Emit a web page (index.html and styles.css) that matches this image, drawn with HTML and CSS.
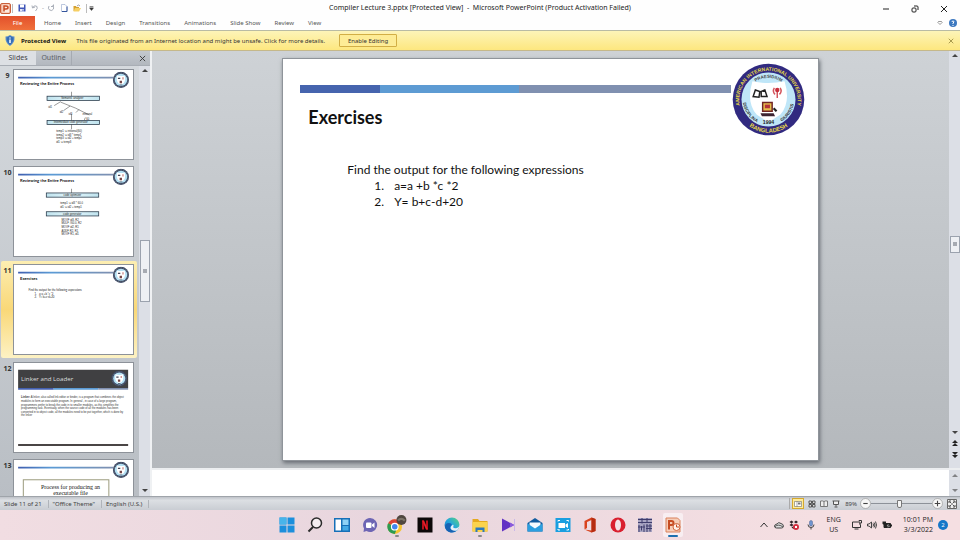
FILE: index.html
```html
<!DOCTYPE html>
<html lang="en">
<head>
<meta charset="utf-8">
<title>Compiler Lecture 3.pptx - Microsoft PowerPoint</title>
<link rel="stylesheet" href="styles.css">
</head>
<body>
<svg class="defs" aria-hidden="true">
  <defs>
    <linearGradient id="gDoc" x1="0" y1="0" x2="1" y2="0"><stop offset="0" stop-color="#3f5fb0"/><stop offset=".35" stop-color="#5b9bd5"/><stop offset="1" stop-color="#7f90b0"/></linearGradient>
    <linearGradient id="gBox" x1="0" y1="0" x2="1" y2="0"><stop offset="0" stop-color="#bfe3ee"/><stop offset=".5" stop-color="#e4f6fb"/><stop offset="1" stop-color="#bfe3ee"/></linearGradient>
    <linearGradient id="gEdge" x1="0" y1="1" x2="1" y2="0"><stop offset="0" stop-color="#1673c4"/><stop offset=".5" stop-color="#23a5dd"/><stop offset="1" stop-color="#5fd678"/></linearGradient>
    <symbol id="seal" viewBox="0 0 100 100">
      <circle cx="50" cy="50" r="49" fill="#312a80"/>
      <circle cx="50" cy="50" r="37" fill="#bfe6f8"/>
      <path d="M28 25Q50 30 72 25Q81 54 66 71L50 81L34 71Q19 54 28 25Z" fill="#fff"/>
      <path id="arcTop" d="M15 70A40 40 0 1 1 85 70" fill="none"/>
      <path id="arcBottom" d="M18 82A45 45 0 0 0 82 82" fill="none"/>
      <path id="arcMotto" d="M22 38A31 31 0 0 1 78 38" fill="none"/>
      <path id="arcLeft" d="M15 46A35 35 0 0 0 42 84" fill="none"/>
      <path id="arcRight" d="M58 84A35 35 0 0 0 85 46" fill="none"/>
      <g font-family="Liberation Sans, sans-serif" font-weight="700" text-anchor="middle">
        <text font-size="7" fill="#e6d848"><textPath href="#arcTop" startOffset="50%">AMERICAN INTERNATIONAL UNIVERSITY</textPath></text>
        <text font-size="8" fill="#e6d848"><textPath href="#arcBottom" startOffset="50%">BANGLADESH</textPath></text>
        <text font-size="6" fill="#444"><textPath href="#arcMotto" startOffset="50%">PRAESIDIUM</textPath></text>
        <text font-size="6" fill="#333"><textPath href="#arcLeft" startOffset="50%">DISCIPLINA</textPath></text>
        <text font-size="6" fill="#333"><textPath href="#arcRight" startOffset="50%">GIURISTIS</textPath></text>
        <text x="50" y="84" font-size="7" fill="#222">1994</text>
      </g>
      <path d="M29 46L32 37L38 39L37 47ZM40 46L40 39L45 37L48 46Z" fill="#fff" stroke="#222" stroke-width="2"/>
      <path d="M62 48V39M58 34Q55 39 59 43M66 34Q69 39 65 43" stroke="#d3545c" stroke-width="2" fill="none"/><circle cx="62" cy="37" r="3" fill="#c8303c"/>
      <path d="M42 54H55V66H42Z" fill="#e8bf4c" stroke="#702424" stroke-width="2"/><path d="M45 57H52V62H45Z" fill="#b4323a"/><path d="M39 69H57L59 73H41Z" fill="#3c2432"/><path d="M57 62L61 66" stroke="#222" stroke-width="3"/>
    </symbol>
    <symbol id="sealSmall" viewBox="0 0 100 100">
      <circle cx="50" cy="50" r="48" fill="#3b4668"/>
      <circle cx="50" cy="50" r="42" fill="none" stroke="#7f8a74" stroke-width="4" stroke-dasharray="6 5"/>
      <circle cx="50" cy="50" r="37" fill="#b4e0f3"/>
      <path d="M28 24Q50 31 72 24Q80 54 66 70L50 80L34 70Q20 54 28 24Z" fill="#fff"/>
      <path d="M32 38h14v7H32z" fill="#445"/><path d="M59 34h6v13h-6z" fill="#b66"/><path d="M42 55h14v15H42z" fill="#734445"/><path d="M42 80h16" stroke="#456" stroke-width="5"/>
    </symbol>
    <symbol id="docHead" viewBox="0 0 480 360">
      <path d="M16 27H400V34H16Z" fill="url(#gDoc)"/>
      <use href="#sealSmall" x="398" y="6" width="68" height="68"/>
    </symbol>
  </defs>
</svg>

<header class="titlebar">
  <div class="quick">
    <svg class="app" viewBox="0 0 22 22"><rect x="1" y="1" width="20" height="20" rx="3" fill="#f3b49c" stroke="#c9603b" stroke-width="2"/><rect x="5" y="3" width="13" height="16" fill="#fbe9e0"/><path d="M8 17V6H12Q16 6 16 9Q16 12 12 12H8" fill="none" stroke="#c84a20" stroke-width="3"/></svg>
    <i class="bar"></i>
    <button aria-label="Save"><svg viewBox="0 0 16 16"><path d="M1 1H15V15H1Z" fill="#3f55b8"/><path d="M4 1H12V7H4Z" fill="#fff"/><path d="M4 10H12V15H4Z" fill="#dfe4f5"/><path d="M9 11h2v3H9z" fill="#3f55b8"/></svg></button>
    <button aria-label="Undo"><svg viewBox="0 0 16 16"><path d="M2 3L3 8L8 6M3 7Q8 1 12 5Q14 9 9 14" fill="none" stroke="#a9aeb8" stroke-width="2"/></svg></button>
    <span class="dash">-</span>
    <button aria-label="Repeat"><svg viewBox="0 0 16 16"><path d="M4 4Q1 9 5 12Q10 15 13 10Q14 6 11 3M13 1V5H8" fill="none" stroke="#a9aeb8" stroke-width="2"/></svg></button>
    <button aria-label="New"><svg viewBox="0 0 16 16"><path d="M3 1H10L14 5V15H3Z" fill="#fff" stroke="#7d93bf" stroke-width="1"/><path d="M14 5V15H4" stroke="#33549c" stroke-width="2" fill="none"/></svg></button>
    <button aria-label="Open"><svg viewBox="0 0 16 16"><path d="M1 4H6L7 6H12V14H1Z" fill="#d5a130"/><path d="M4 8H16L12 15H1Z" fill="#f6cf63"/><path d="M8 4Q11 0 14 4" fill="none" stroke="#445" stroke-width="1"/></svg></button>
    <i class="bar end"></i>
    <button class="more" aria-label="Customize"><svg viewBox="0 0 8 8"><path d="M1 1H7M1 3H7L4 7Z" fill="#333" stroke="#333" stroke-width="1"/></svg></button>
  </div>
  <h1>Compiler Lecture 3.pptx [Protected View]&nbsp; -&nbsp; Microsoft PowerPoint (Product Activation Failed)</h1>
  <div class="winbtns">
    <button aria-label="Minimize"><svg viewBox="0 0 8 8"><path d="M1 4H7" stroke="#222" fill="none"/></svg></button>
    <button aria-label="Restore"><svg viewBox="0 0 8 8"><rect x="1" y="3" width="4" height="4" rx="1" fill="none" stroke="#222"/><path d="M3 1H6Q7 1 7 2V5" fill="none" stroke="#222"/></svg></button>
    <button aria-label="Close"><svg viewBox="0 0 8 8"><path d="M1 1L7 7M7 1L1 7" stroke="#222" fill="none"/></svg></button>
  </div>
</header>

<nav class="ribbon">
  <button class="file">File</button>
  <button>Home</button><button>Insert</button><button>Design</button><button>Transitions</button><button>Animations</button><button>Slide Show</button><button>Review</button><button>View</button>
  <span class="grow"></span>
  <button class="glyph" aria-label="Expand ribbon"><svg viewBox="0 0 8 8"><path d="M2 2H6L7 3L4 6L1 3Z" fill="#fff" stroke="#777"/></svg></button>
  <button class="glyph" aria-label="Help"><svg viewBox="0 0 8 8"><circle cx="4" cy="4" r="4" fill="#3c78c0"/><path d="M3 3Q3 2 4 2Q5 2 5 3L4 4V5M4 6V7" fill="none" stroke="#fff"/></svg></button>
</nav>

<section class="message">
  <svg viewBox="0 0 20 22"><path d="M10 0Q15 3 19 3Q20 16 10 22Q0 16 1 3Q5 3 10 0Z" fill="#5f8fcb"/><path d="M10 2Q14 4 17 5Q17 15 10 20Q3 15 3 5Q6 4 10 2Z" fill="#356db5"/><path d="M10 5V7M10 9V16" stroke="#fff" stroke-width="3"/></svg>
  <strong>Protected View</strong>
  <span>This file originated from an Internet location and might be unsafe. Click for more details.</span>
  <button class="enable">Enable Editing</button>
  <i class="grow"></i>
  <button class="dismiss" aria-label="Close message"><svg viewBox="0 0 8 8"><path d="M1 1L7 7M7 1L1 7" stroke="#8d7f34" stroke-width="1"/></svg></button>
</section>

<main>
  <aside>
    <div class="tabs"><button class="on">Slides</button><button class="off">Outline</button><i class="grow"></i><button class="x" aria-label="Close pane"><svg viewBox="0 0 8 8"><path d="M1 1L7 7M7 1L1 7" stroke="#333" stroke-width="1"/></svg></button></div>
    <div class="panel">
      <ol class="thumbs">
        <li><b>9</b><svg viewBox="0 0 480 360"><use href="#docHead"/>
          <text class="th" x="24" y="61">Reviewing the Entire Process</text>
          <g class="box"><rect x="133" y="106" width="212" height="17"/><rect x="133" y="204" width="212" height="16"/></g>
          <path class="ln" d="M232 88V106M188 128L162 144M188 130L248 154L304 182M226 146L200 164M262 160L250 172M288 192L284 202M232 178V204M232 220V240"/>
          <g class="tiny"><text x="190" y="118">Semantic analyzer</text><text x="160" y="216">Intermediate code generator</text><text x="138" y="154">id1</text><text x="184" y="174">id2</text><text x="220" y="182">id3</text><text x="276" y="182">inttoreal</text><text x="292" y="201">60</text>
          <text x="170" y="251">temp1 := inttoreal(60)</text><text x="170" y="266">temp2 := id3 * temp1</text><text x="170" y="281">temp3 := id2 + temp2</text><text x="170" y="296">id1 := temp3</text></g></svg></li>
        <li><b>10</b><svg viewBox="0 0 480 360"><use href="#docHead"/>
          <text class="th" x="24" y="61">Reviewing the Entire Process</text>
          <g class="box"><rect x="130" y="105" width="212" height="17"/><rect x="130" y="181" width="212" height="17"/></g>
          <path class="ln" d="M232 88V105"/>
          <g class="tiny"><text x="200" y="118">code optimizer</text><text x="198" y="194">code generator</text><text x="186" y="150">temp1 := id3 * 60.0</text><text x="186" y="167">id1 := id2 + temp1</text><text x="192" y="217">MOVF id3, R2</text><text x="192" y="232">MULF #60.0, R2</text><text x="192" y="247">MOVF id2, R1</text><text x="192" y="262">ADDF R2, R1</text><text x="192" y="277">MOVF R1, id1</text></g></svg></li>
        <li class="current"><b>11</b><svg viewBox="0 0 480 360"><use href="#docHead"/>
          <text class="th" x="24" y="61">Exercises</text>
          <g class="small"><text x="58" y="107">Find the output for the following expressions</text><text x="82" y="121">1.</text><text x="100" y="121">a=a +b *c *2</text><text x="82" y="135">2.</text><text x="100" y="135">Y= b+c-d+20</text></g></svg></li>
        <li><b>12</b><svg viewBox="0 0 480 360"><path d="M16 27H461V101H16Z" fill="#404042"/><path d="M16 101H160V108H16Z" fill="#4460b0"/><path d="M160 101H340V108H160Z" fill="#5b9bd5"/><path d="M340 101H461V108H340Z" fill="#8090b0"/><use href="#sealSmall" x="392" y="30" width="66" height="66"/>
          <text class="dark" x="28" y="73">Linker and Loader</text>
          <g class="para"><text x="28" y="143"><tspan font-weight="700">Linker:</tspan> A linker, also called link editor or binder, is a program that combines the object</text><text x="28" y="158">modules to form an executable program. In general , in case of a large program,</text><text x="28" y="173">programmers prefer to break the code in to smaller modules, as this simplifies the</text><text x="28" y="188">programming task. Eventually, when the source code of all the modules has been</text><text x="28" y="202">converted in to object code, all the modules need to be put together, which is done by</text><text x="28" y="216">the linker</text></g>
          <path d="M16 328H461V336H16Z" fill="#4a4545"/></svg></li>
        <li><b>13</b><svg viewBox="0 0 480 360"><use href="#docHead"/><rect x="37" y="80" width="346" height="260" fill="#fff" stroke="#9a9a7c" stroke-width="4"/>
          <g class="serif"><text x="228" y="119">Process for producing an</text><text x="228" y="143">executable file</text></g></svg></li>
      </ol>
      <div class="scroll left"><i class="up"></i><i class="knob"></i><i class="down"></i></div>
    </div>
  </aside>

  <section class="work">
    <div class="stage">
      <article class="slide">
        <div class="stripe"><i></i><i></i><i></i></div>
        <svg class="seal" viewBox="0 0 100 100" role="img" aria-label="University seal"><use href="#seal"/></svg>
        <h2>Exercises</h2>
        <p>Find the output for the following expressions</p>
        <ol><li>a=a +b *c *2</li><li>Y= b+c-d+20</li></ol>
      </article>
    </div>
    <div class="scroll right"><i class="up"></i><i class="knob"></i><i class="down"></i>
      <svg class="pager" viewBox="0 0 8 20"><path d="M4 0L7 3H1ZM4 3L7 6H1ZM1 12H7L4 15ZM1 15H7L4 18Z" fill="#222"/></svg></div>
    <div class="notes"></div>
    <div class="scroll noteScroll"><i class="up"></i><i class="down"></i></div>
  </section>
</main>

<footer class="status">
  <span>Slide 11 of 21</span><span>"Office Theme"</span><span>English (U.S.)</span>
  <i class="grow"></i>
  <div class="views">
    <button class="sel" aria-label="Normal"><svg viewBox="0 0 16 16"><path d="M1 3H15V13H1ZM6 3V13" fill="#fff" stroke="#555"/><path d="M8 5H13V9H8Z" fill="#777"/></svg></button>
    <button aria-label="Slide sorter"><svg viewBox="0 0 16 16"><path d="M2 2H7V7H2ZM9 2H14V7H9ZM2 9H7V14H2ZM9 9H14V14H9Z" fill="#ddd" stroke="#555" stroke-width="2"/></svg></button>
    <button aria-label="Reading view"><svg viewBox="0 0 16 16"><path d="M1 2Q5 1 8 3Q11 1 15 2V13H1ZM8 3V13" fill="#eee" stroke="#777" stroke-width="2"/></svg></button>
    <button aria-label="Slide show"><svg viewBox="0 0 16 16"><path d="M1 2H15M3 2V9H13V2M8 9V13M5 14H11" fill="#eee" stroke="#555" stroke-width="2"/></svg></button>
  </div>
  <label for="zoom">89%</label>
  <button class="round" aria-label="Zoom out"><svg viewBox="0 0 20 20"><circle cx="10" cy="10" r="9" fill="#f7f7f7" stroke="#888"/><path d="M6 10H14" stroke="#444" stroke-width="2"/></svg></button>
  <input id="zoom" type="range" min="0" max="100" value="47">
  <button class="round" aria-label="Zoom in"><svg viewBox="0 0 20 20"><circle cx="10" cy="10" r="9" fill="#f7f7f7" stroke="#888"/><path d="M5 10H15M10 5V15" stroke="#444" stroke-width="2"/></svg></button>
  <button class="fit" aria-label="Fit to window"><svg viewBox="0 0 20 20"><path d="M1 1H19V19H1Z" fill="#f0f0f0" stroke="#666" stroke-width="2"/><path d="M4 8V4H8M12 4H16V8M16 12V16H12M8 16H4V12M5 5L9 9M15 5L11 9M5 15L9 11M15 15L11 11" fill="none" stroke="#555" stroke-width="2"/></svg></button>
</footer>

<footer class="taskbar">
  <i></i>
  <div class="apps">
    <button aria-label="Start"><svg viewBox="0 0 32 32"><path d="M1 1H15V15H1ZM17 1H31V15H17ZM1 17H15V31H1ZM17 17H31V31H17Z" fill="#1c8fdc"/><path d="M1 1H15V15H1Z" fill="#48b4ea"/></svg></button>
    <button aria-label="Search"><svg viewBox="0 0 32 32"><circle cx="19" cy="12" r="10" fill="#f6eff2" stroke="#2b2b2b" stroke-width="3"/><path d="M12 20L3 29" stroke="#2b2b2b" stroke-width="4"/></svg></button>
    <button aria-label="Widgets"><svg viewBox="0 0 32 32"><path d="M0 2H32V30H0Z" fill="#1670b8"/><path d="M3 5H14V27H3Z" fill="#fff"/><path d="M17 5H29V16H17Z" fill="#8ed2f5"/><path d="M17 18H29V27H17Z" fill="#45aae4"/></svg></button>
    <button aria-label="Chat"><svg viewBox="0 0 32 32"><path d="M16 2A14 14 0 1 1 9 28L3 30L4 23A14 14 0 0 1 16 2Z" fill="#6d65b4"/><rect x="8" y="11" width="11" height="11" rx="2" fill="#fff"/><path d="M20 15L25 11V22L20 18Z" fill="#fff"/></svg></button>
    <button class="open wide" aria-label="Chrome"><svg viewBox="0 0 36 36"><circle cx="14" cy="21" r="13" fill="#f4c430"/><path d="M14 21L2 15A13 13 0 0 1 25 14Z" fill="#dc4437"/><path d="M2 15A13 13 0 0 0 14 34L18 24L14 21Z" fill="#2c9b52"/><circle cx="14" cy="21" r="6" fill="#4286f0" stroke="#fff" stroke-width="2"/><circle cx="26" cy="9" r="9" fill="#50463f"/><path d="M20 10Q25 4 32 10" stroke="#7c7368" stroke-width="4" fill="none"/></svg></button>
    <button aria-label="Netflix"><svg viewBox="0 0 32 32"><path d="M1 1H31V31H1Z" fill="#0c0808"/><path d="M12 7V25M20 7V25" stroke="#b5101b" stroke-width="4"/><path d="M10 7H14L22 25H18Z" fill="#e51c27"/></svg></button>
    <button aria-label="Edge"><svg viewBox="0 0 32 32"><circle cx="16" cy="16" r="15" fill="url(#gEdge)"/><path d="M2 20Q2 12 10 12Q15 12 16 16Q11 18 13 23Q16 28 26 27Q20 32 13 31Q4 29 2 20Z" fill="#1763b4"/><path d="M18 15Q21 18 18 20Q20 24 26 22Q31 20 31 15V20L26 27Q15 29 13 22Q13 18 18 15Z" fill="#e9eef6"/></svg></button>
    <button class="open" aria-label="File Explorer"><svg viewBox="0 0 32 32"><path d="M1 4H12L15 8H31V29H1Z" fill="#e5a91e"/><path d="M1 10H31V29H1Z" fill="#fbd34d"/><path d="M7 21H25V30H7Z" fill="#2c79bd"/><path d="M11 26H21V30H11Z" fill="#fbd34d"/></svg></button>
    <button aria-label="Player"><svg viewBox="0 0 32 32"><path d="M4 3L28 16L4 29Z" fill="#6232c4"/><path d="M20 11L29 16L20 21Z" fill="#8a5bdc"/><path d="M29 4V28" stroke="#c9b8e8" stroke-width="2"/></svg></button>
    <button aria-label="Mail"><svg viewBox="0 0 32 32"><path d="M1 12L16 2L31 12V29H1Z" fill="#115b9e"/><path d="M5 11H27V20L16 26L5 20Z" fill="#f5fbff"/><path d="M1 13L16 23L31 13V29H1Z" fill="#2b9fe0"/></svg></button>
    <button aria-label="Zoom"><svg viewBox="0 0 32 32"><path d="M1 2H31V30H1Z" fill="#1a9fe0"/><path d="M7 12H20V22H7ZM21 15L26 12V22L21 19Z" fill="#fff"/><path d="M6 9V7H10M23 7H27V9M6 24V26H10M23 26H27V24" stroke="#fff" stroke-width="2" fill="none"/></svg></button>
    <button aria-label="Office"><svg viewBox="0 0 32 32"><path d="M5 8L19 1L27 4V28L19 31L5 25L19 27V6L10 10V22L5 25Z" fill="#d9431e"/><path d="M19 1L27 4V28L19 31Z" fill="#b52c12"/></svg></button>
    <button aria-label="Opera"><svg viewBox="0 0 32 32"><ellipse cx="16" cy="16" rx="15" ry="15" fill="#d9202f"/><ellipse cx="16" cy="16" rx="6" ry="11" fill="#f3e4e8"/></svg></button>
    <button aria-label="Visual tool"><svg viewBox="0 0 32 32"><path d="M2 2H30V30H2Z" fill="#a9a5c2"/><path d="M2 5H30M2 11H30M4 16V30M9 18V27M14 15V30M2 20H16M18 18H30M18 23H30M20 14V30M26 14V29M10 2V13M20 2V11" stroke="#3f3c6c" stroke-width="2" fill="none"/></svg></button>
    <button class="active" aria-label="PowerPoint"><svg viewBox="0 0 32 32"><path d="M2 2H25L30 7V30H2Z" fill="#f6cdb8" stroke="#d9825d" stroke-width="2"/><path d="M8 25V8H13Q17 8 17 12Q17 16 13 16H8" fill="none" stroke="#c64c22" stroke-width="4"/><circle cx="23" cy="20" r="7" fill="#fff2ea" stroke="#d0643c" stroke-width="2"/><path d="M23 15V20H28" stroke="#c64c22" stroke-width="2" fill="none"/></svg></button>
  </div>
  <div class="tray">
    <svg viewBox="0 0 20 20"><path d="M3 14L10 6L17 14" fill="none" stroke="#333" stroke-width="2"/></svg>
    <svg viewBox="0 0 20 20"><path d="M5 16Q1 16 1 12Q2 8 6 8Q9 3 14 7Q19 8 19 13Q18 16 15 16Z" fill="#ddd" stroke="#444" stroke-width="2"/><path d="M2 13Q9 7 18 14" stroke="#555" stroke-width="2" fill="none"/></svg>
    <svg viewBox="0 0 20 20"><path d="M1 4L5 1L9 4L5 7ZM10 4L14 1L18 4L14 7ZM1 10L5 7L9 10L5 13ZM5 15L9 12L12 15L9 18Z" fill="#30242a"/><circle cx="14" cy="14" r="6" fill="#d32e40"/><path d="M12 12L16 16M16 12L12 16" stroke="#fff" stroke-width="2"/></svg>
    <svg class="mic" viewBox="0 0 20 20"><rect x="7" y="1" width="6" height="11" rx="3" fill="#6f94cf" stroke="#4b6395"/><path d="M4 9Q4 15 10 15Q16 15 16 9M10 15V19" fill="none" stroke="#444" stroke-width="2"/></svg>
    <span class="lang">ENG<br>US</span>
    <svg viewBox="0 0 20 20"><path d="M12 4H1V15H17V9M5 18H13M14 1H19V6H14ZM16 6V10" fill="none" stroke="#333" stroke-width="2"/></svg>
    <svg viewBox="0 0 20 20"><path d="M1 8H4L9 4V16L4 12H1ZM12 7Q14 10 12 13M14 5Q18 10 14 15M17 3Q21 10 17 17" fill="none" stroke="#444" stroke-width="2"/></svg>
    <svg viewBox="0 0 20 20"><path d="M4 7H17V15H4Z" fill="#222" stroke="#222" stroke-width="2"/><path d="M19 9V13" stroke="#222" stroke-width="2"/><path d="M1 3H8V8Q5 11 1 8Z" fill="#222"/><path d="M13 8L10 12H15L12 15" stroke="#eee" fill="none"/></svg>
    <time>10:01 PM<br>3/3/2022</time>
    <span class="badge">2</span>
  </div>
</footer>
</body>
</html>
```
FILE: styles.css
```css
* { box-sizing: border-box; }
body {
  margin: 0;
  height: 100vh;
  display: flex;
  flex-direction: column;
  overflow: hidden;
  background: #fff;
  color: #333;
  font: 6px/8px "Noto Sans", "Open Sans", sans-serif;
}
button {
  font: inherit;
  color: inherit;
  background: none;
  border: 0;
  padding: 0;
  display: flex;
  align-items: center;
  justify-content: center;
}
svg { display: block; flex: none; }
.defs { position: absolute; width: 0; height: 0; }
.grow { flex: 1; }

.titlebar {
  height: 16px;
  flex: none;
  display: grid;
  grid-template-columns: 1fr auto 1fr;
  align-items: center;
  background: #fefefe;
}
.quick { display: flex; align-items: center; gap: 5px; height: 13px; }
.quick svg { width: 8px; height: 8px; }
.quick .app { width: 11px; height: 11px; }
.quick .bar { width: 1px; height: 9px; background: #bbb; margin-left: -4px; }
.quick .bar.end { margin-left: 0; }
.quick .dash { margin: 0 -2px; color: #888; }
.quick .more { margin-left: -3px; }
.quick .more svg { width: 5px; height: 5px; }
.titlebar h1 { margin: 0; font-size: 7px; font-weight: 400; line-height: 14px; color: #222; }
.winbtns { display: flex; justify-content: flex-end; gap: 21px; padding: 2px 12px 0 0; }
.winbtns svg { width: 8px; height: 8px; }

.ribbon {
  height: 15px;
  flex: none;
  display: flex;
  align-items: center;
  gap: 14px;
  padding-right: 3px;
  background: #fefefe;
  color: #555;
  border-bottom: 1px solid #b9bba4;
}
.ribbon .file {
  align-self: stretch;
  width: 35px;
  margin-right: -5px;
  background: linear-gradient(#e2502c, #f0703a);
  color: #fff;
}
.ribbon .glyph { margin-left: -8px; }
.ribbon .glyph svg { width: 8px; height: 8px; }
.ribbon .glyph:nth-last-child(2) svg { width: 6px; height: 6px; }

.message {
  height: 20px;
  flex: none;
  display: flex;
  align-items: center;
  padding: 0 6px 0 5px;
  background: linear-gradient(#fdf4b8, #fde77f);
  border-bottom: 1px solid #c5b88a;
  color: #333;
}
.message > svg { width: 10px; height: 11px; margin-right: 6px; }
.message strong { color: #111; margin-right: 10px; }
.message .enable {
  height: 13px;
  width: 58px;
  margin-left: 14px;
  border: 1px solid #d2ae45;
  border-radius: 1px;
  background: #fdec96;
}
.message .dismiss svg { width: 6px; height: 6px; }

main { flex: 1; min-height: 0; display: flex; }
aside {
  width: 152px;
  flex: none;
  display: flex;
  flex-direction: column;
  background: linear-gradient(#d6dade, #b9bec4);
  border-right: 2px solid #eff1f3;
}
.tabs {
  height: 15px;
  flex: none;
  display: flex;
  background: linear-gradient(#c3c8ce, #b3b8bf);
  border-bottom: 1px solid #a9aeb5;
  font-size: 7px;
  color: #444;
}
.tabs .on { width: 36px; background: #dde0e4; }
.tabs .off { width: 36px; border-right: 1px solid #a5aab1; color: #5c6066; }
.tabs .x { width: 15px; }
.tabs .x svg { width: 7px; height: 7px; }
.panel { flex: 1; min-height: 0; display: flex; }
.thumbs {
  flex: 1;
  margin: 0;
  padding: 0;
  list-style: none;
  overflow: hidden;
}
.thumbs li { display: flex; height: 97px; padding: 3px 2px; }
.thumbs li svg {
  width: 121px;
  height: 91px;
  background: #fff;
  border: 1px solid #8d9299;
}
.thumbs b { width: 11px; flex: none; display: flex; justify-content: center; margin-top: 3px; font-size: 7px; line-height: 7px; }
.thumbs li.current {
  margin: 1px 2px 1px 1px;
  padding-left: 1px;
  background: linear-gradient(#fdeeb2, #f9d878 50%, #fdf2c4);
  border-radius: 2px;
}
.th { font: 700 17px Lato, sans-serif; fill: #111; }
.small { font: 11px Lato, sans-serif; fill: #222; }
.tiny { font: 11px "Liberation Sans", sans-serif; fill: #222; }
.para { font: 11px "Liberation Sans", sans-serif; fill: #333; }
.dark { font: 25px "Open Sans", sans-serif; fill: #ddd; }
.serif { font: 24px "Liberation Serif", serif; fill: #111; text-anchor: middle; }
.box { fill: url(#gBox); stroke: #234; stroke-width: 3px; }
.ln { fill: none; stroke: #333; stroke-width: 2px; }

.scroll {
  width: 11px;
  flex: none;
  display: flex;
  flex-direction: column;
  align-items: center;
  padding: 3px 0;
  background: #dcdfe6;
}
.up, .down { border: 3px solid transparent; width: 0; height: 0; }
.up { border-top: 0; border-bottom-color: #444; }
.down { border-bottom: 0; border-top-color: #444; }
.knob {
  width: 10px;
  display: flex;
  align-items: center;
  justify-content: center;
  background: #eef0f4;
  border: 1px solid #9ba2ae;
}
.knob::before { content: ""; width: 4px; height: 4px; background: #a6aab2; }
.left { padding-bottom: 4px; }
.left .knob { height: 62px; margin: 168px 0 auto; }
.right .knob { height: 17px; margin: auto 0; }
.right .pager { width: 8px; height: 20px; margin-top: 6px; }
.scroll.right { padding-bottom: 8px; }

.work {
  flex: 1;
  min-width: 0;
  display: grid;
  grid-template-columns: 1fr 11px;
  grid-template-rows: 1fr 26px;
  row-gap: 2px;
  background: #eceef0;
}
.stage {
  display: flex;
  align-items: center;
  justify-content: center;
  background: linear-gradient(#ced2d6, #b4b8bc);
}
.slide {
  position: relative;
  width: 67.3%;
  aspect-ratio: 4 / 3;
  padding: 26px 17px;
  background: #fff;
  border: 1px solid #8f949a;
  box-shadow: 1px 2px 4px #666b72;
  color: #111;
  font: 12px/16px Lato, sans-serif;
}
.stripe { display: flex; height: 8px; margin-right: 70px; }
.stripe i { background: #4664ae; width: 80px; }
.stripe i:nth-child(2) { background: #5d9bd3; width: 139px; }
.stripe i:nth-child(3) { background: #8090b0; flex: 1; }
.seal { position: absolute; top: 4px; right: 13px; width: 73px; height: 73px; }
.slide h2 { margin: 12px 8px 33px; font-size: 18px; line-height: 24px; font-weight: 700; }
.slide p { margin: 0 47px; }
.slide ol { margin: 0; padding-left: 74px; list-style: none; counter-reset: step; }
.slide li { display: flex; gap: 10px; counter-increment: step; }
.slide li::before { content: counter(step) "."; }
.notes { background: #fff; }
.noteScroll { justify-content: space-between; padding: 4px 0; }
.noteScroll i { opacity: .6; }

.status {
  height: 14px;
  flex: none;
  display: flex;
  align-items: center;
  padding: 0 3px 0 0;
  background: linear-gradient(#bfc3c9, #dcdfe3 25%, #c9cdd3);
  border-top: 1px solid #9fa4aa;
  color: #444;
}
.status > span { padding: 0 6px 0 4px; border-right: 1px solid #b0b4ba; }
.views { display: flex; gap: 3px; padding-left: 2px; border-left: 1px solid #aaa; }
.views button { width: 9px; height: 11px; }
.views svg { width: 8px; height: 8px; }
.views .sel { width: 12px; background: #fdeb9c; border: 1px solid #d5a82e; }
.status label { margin: 0 3px 0 5px; }
.round svg { width: 11px; height: 11px; }
.fit { margin-left: 4px; }
.fit svg { width: 10px; height: 10px; }
input[type="range"] {
  appearance: none;
  width: 61px;
  height: 10px;
  margin: 0;
  background: linear-gradient(#8d9299, #8d9299) center / 100% 1px no-repeat;
}
input[type="range"]::-webkit-slider-thumb {
  appearance: none;
  width: 5px;
  height: 8px;
  background: #f5f5f5;
  border: 1px solid #777;
  border-radius: 0 0 2px 2px;
}

.taskbar {
  height: 30px;
  flex: none;
  display: grid;
  grid-template-columns: 1fr 413px 1fr;
  background: linear-gradient(90deg, #f1dde2, #e8d6de 40%, #f5dfe2 85%);
  color: #222;
  font-family: "Open Sans", sans-serif;
}
.apps { display: grid; grid-template-columns: repeat(15, 1fr); align-items: center; justify-items: center; }
.apps button { position: relative; width: 20px; height: 24px; }
.apps svg { width: 16px; height: 16px; }
.apps .wide svg { width: 20px; height: 20px; }
.apps .active { background: #f8eef1; border-radius: 2px; }
.apps .open::after, .apps .active::after {
  content: "";
  position: absolute;
  bottom: 0;
  width: 4px;
  height: 2px;
  border-radius: 1px;
  background: #888;
}
.apps .active::after { width: 10px; background: #1d6fae; }
.tray { display: flex; align-items: center; justify-content: flex-end; gap: 5px; padding-right: 12px; }
.tray svg { width: 10px; height: 10px; }
.tray .mic { margin: 0 6px 0 2px; height: 12px; }
.lang { font-size: 7px; line-height: 10px; text-align: center; margin-right: 6px; }
.tray time { font-size: 7px; line-height: 10px; text-align: right; margin-left: 6px; }
.badge { width: 10px; height: 10px; border-radius: 50%; background: #1576c8; color: #fff; text-align: center; line-height: 10px; }
```
